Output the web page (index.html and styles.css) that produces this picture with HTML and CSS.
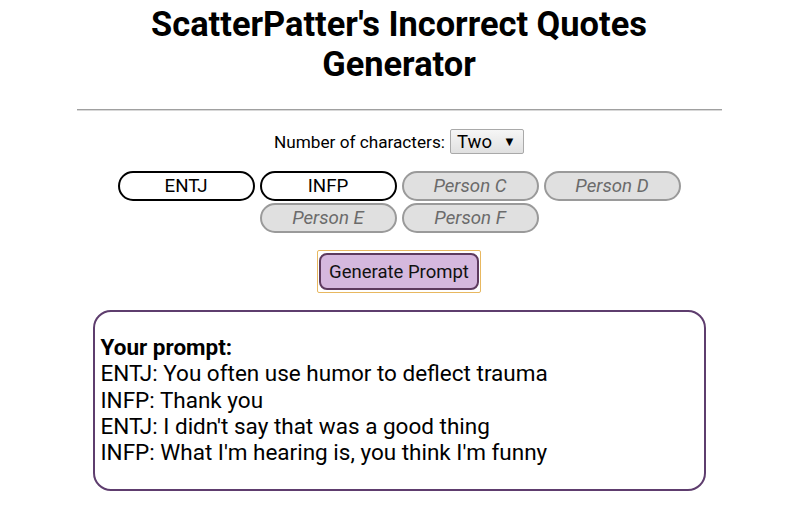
FILE: index.html
```html
<!DOCTYPE html>
<html>
<head>
<meta charset="utf-8">
<link rel="stylesheet" href="styles.css">
</head>
<body>
<div class="page">
  <h1 class="title">ScatterPatter's Incorrect Quotes<br>Generator</h1>
  <hr class="rule">
  <div class="count-row">
    <label class="count-label">Number of characters:</label>
    <span class="select"><span class="select-value">Two</span><span class="select-arrow">▼</span></span>
  </div>
  <div class="chars">
    <button class="char active">ENTJ</button>
    <button class="char active">INFP</button>
    <button class="char off">Person C</button>
    <button class="char off">Person D</button>
    <button class="char off">Person E</button>
    <button class="char off">Person F</button>
  </div>
  <div class="gen-row">
    <button class="gen">Generate Prompt</button>
  </div>
  <div class="output">
    <div class="out-head">Your prompt:</div>
    <div>ENTJ: You often use humor to deflect trauma</div>
    <div>INFP: Thank you</div>
    <div>ENTJ: I didn't say that was a good thing</div>
    <div>INFP: What I'm hearing is, you think I'm funny</div>
  </div>
</div>
</body>
</html>
```

FILE: styles.css
```css
html, body {
  margin: 0;
  padding: 0;
  background: #fff;
}
body {
  font-family: Roboto, "Liberation Sans", sans-serif;
  color: #000;
}
.page {
  display: flex;
  flex-direction: column;
  align-items: center;
  padding-top: 4px;
}
.title {
  margin: 0;
  font-size: 34.4px;
  line-height: 40px;
  font-weight: 700;
  text-align: center;
}
.rule {
  width: 645px;
  margin: 25px 0 0 0;
  border: 0;
  border-top: 1px solid #a0a0a0;
  border-bottom: 1px solid #d8d8d8;
}
.count-row {
  margin-top: 18px;
  display: flex;
  align-items: center;
  gap: 5px;
  font-size: 17.2px;
}
.select {
  display: inline-flex;
  align-items: center;
  justify-content: space-between;
  box-sizing: border-box;
  width: 74px;
  height: 25px;
  padding: 0 7px 0 6px;
  border: 1px solid #a9a9a9;
  border-radius: 2px;
  background: linear-gradient(#f6f6f6, #e0e0e0);
  font-size: 18.5px;
}
.select-arrow {
  font-size: 13px;
}
.chars {
  margin-top: 17px;
  width: 580px;
  display: flex;
  flex-wrap: wrap;
  justify-content: center;
  column-gap: 5px;
  row-gap: 2px;
}
.char {
  box-sizing: border-box;
  width: 137px;
  height: 30px;
  border-radius: 15px;
  font-family: Roboto, "Liberation Sans", sans-serif;
  font-size: 18.7px;
  padding: 0;
}
.char.active {
  background: #fff;
  border: 2.5px solid #000;
  color: #000;
}
.char.off {
  background: #e0e0e0;
  border: 2.5px solid #9a9a9a;
  color: #6b6b6b;
  font-style: italic;
}
.gen-row {
  margin-top: 18px;
  outline: 1px solid #e8b860;
  border-radius: 1px;
  padding: 2px 1px;
  display: flex;
}
.gen {
  box-sizing: border-box;
  width: 160px;
  height: 37px;
  background: #d5b8de;
  border: 2.5px solid #5d3a5e;
  border-radius: 8px;
  font-family: Roboto, "Liberation Sans", sans-serif;
  font-size: 18.5px;
  color: #111;
  padding: 0;
}
.output {
  margin-top: 18px;
  box-sizing: border-box;
  width: 613px;
  height: 181px;
  border: 2.5px solid #5e3d6e;
  border-radius: 18px;
  padding: 22px 6px;
  font-size: 22.5px;
  line-height: 26.3px;
}
.out-head {
  font-weight: 700;
}
```
